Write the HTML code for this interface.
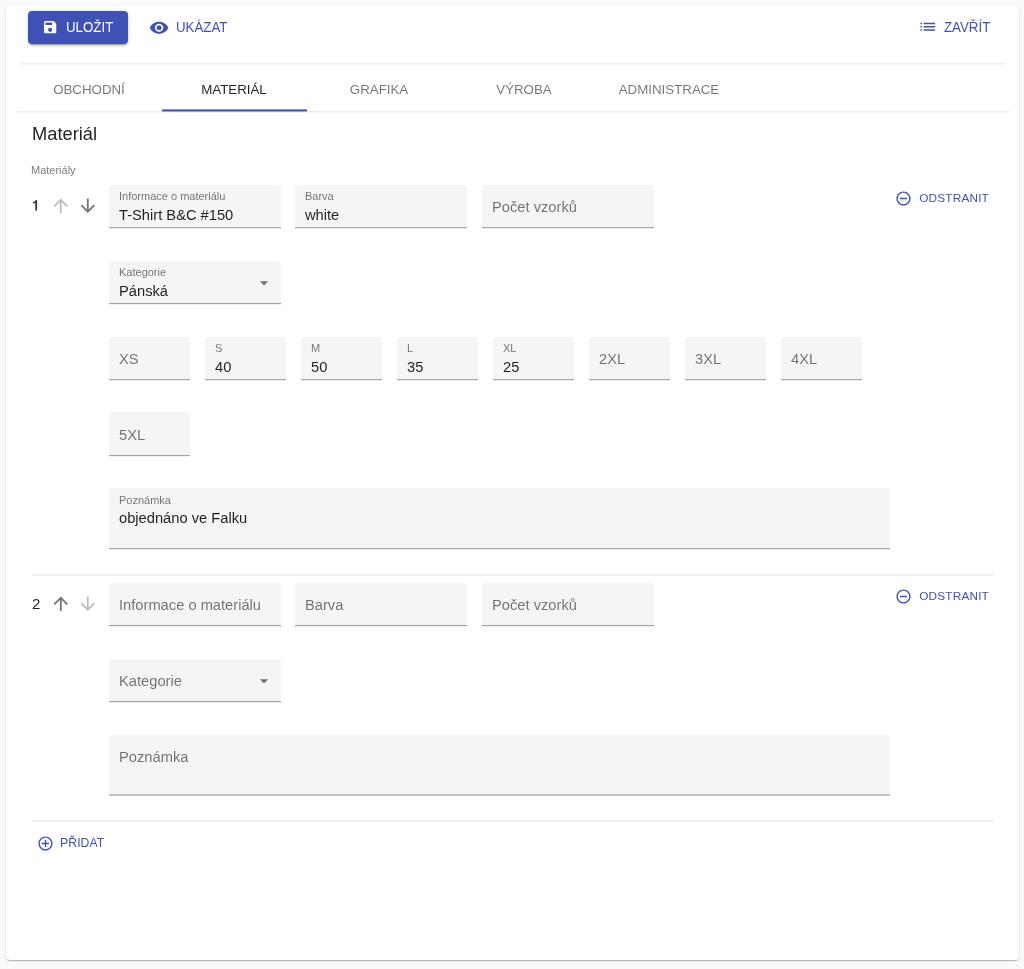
<!DOCTYPE html>
<html><head><meta charset="utf-8"><title>Materiál</title>
<style>
html,body{margin:0;padding:0;}
body{width:1024px;height:969px;background:#fafafa;position:relative;overflow:hidden;font-family:"Liberation Sans", sans-serif;}
#paper{position:absolute;left:6px;top:6px;width:1012.5px;height:954px;background:#fff;border-radius:4px;box-shadow:0px 2px 1px -1px rgba(0,0,0,0.15),0px 1px 1px 0px rgba(0,0,0,0.10),0px 1px 3px 0px rgba(0,0,0,0.10);}
.t{position:absolute;white-space:nowrap;will-change:transform;}
.r{position:absolute;}
.ic{position:absolute;display:block;}
.fld{position:absolute;background:#f5f5f5;border-radius:4px 4px 0 0;box-sizing:border-box;}
</style></head><body>
<div id="paper"></div>
<div class="r" style="left:28px;top:11px;width:100px;height:33px;background:#3f51b5;border-radius:4px;box-shadow:0px 3px 1px -2px rgba(0,0,0,0.2),0px 2px 2px 0px rgba(0,0,0,0.14),0px 1px 5px 0px rgba(0,0,0,0.12);"></div>
<svg class="ic" style="left:42.45px;top:19.20px" width="16.3" height="16.3" viewBox="0 0 24 24" preserveAspectRatio="none"><path d="M17 3H5c-1.11 0-2 .9-2 2v14c0 1.1.89 2 2 2h14c1.1 0 2-.9 2-2V7l-4-4zm-5 16c-1.66 0-3-1.34-3-3s1.34-3 3-3 3 1.34 3 3-1.34 3-3 3zm3-10H5V5h10v4z" fill="#fff"/></svg>
<div class="t" style="left:65.80px;top:21.24px;font-size:13.3px;line-height:13.3px;color:#fff;transform:scaleY(1.04);transform-origin:0 10.76px;">ULOŽIT</div>
<svg class="ic" style="left:149.20px;top:17.70px" width="20.2" height="19.4" viewBox="0 0 24 24" preserveAspectRatio="none"><path d="M12 4.5C7 4.5 2.73 7.61 1 12c1.73 4.39 6 7.5 11 7.5s9.27-3.11 11-7.5c-1.73-4.39-6-7.5-11-7.5zM12 17c-2.76 0-5-2.24-5-5s2.24-5 5-5 5 2.24 5 5-2.24 5-5 5zm0-8c-1.66 0-3 1.34-3 3s1.34 3 3 3 3-1.34 3-3-1.34-3-3-3z" fill="#3f51b5"/></svg>
<div class="t" style="left:175.60px;top:21.04px;font-size:13.3px;line-height:13.3px;color:#3f51b5;transform:scaleY(1.04);transform-origin:0 10.76px;">UKÁZAT</div>
<svg class="ic" style="left:917.85px;top:16.95px" width="19.5" height="19.5" viewBox="0 0 24 24" preserveAspectRatio="none"><path d="M3 13h2v-2H3v2zm0 4h2v-2H3v2zm0-8h2V7H3v2zm4 4h14v-2H7v2zm0 4h14v-2H7v2zM7 7v2h14V7H7z" fill="#3f51b5"/></svg>
<div class="t" style="left:944.30px;top:21.14px;font-size:13.3px;line-height:13.3px;color:#3f51b5;transform:scaleY(1.04);transform-origin:0 10.76px;">ZAVŘÍT</div>
<div class="r" style="left:21px;top:63px;width:984px;height:1px;background:#ebebeb;"></div>
<div class="r" style="left:21px;top:64px;width:984px;height:1px;background:#f6f6f6;"></div>
<div class="t" style="left:-111.00px;width:400px;text-align:center;top:82.54px;font-size:13.3px;line-height:13.3px;color:rgba(0,0,0,0.54);">OBCHODNÍ</div>
<div class="t" style="left:34.00px;width:400px;text-align:center;top:82.54px;font-size:13.3px;line-height:13.3px;color:rgba(0,0,0,0.87);">MATERIÁL</div>
<div class="t" style="left:179.00px;width:400px;text-align:center;top:82.54px;font-size:13.3px;line-height:13.3px;color:rgba(0,0,0,0.54);">GRAFIKA</div>
<div class="t" style="left:324.00px;width:400px;text-align:center;top:82.54px;font-size:13.3px;line-height:13.3px;color:rgba(0,0,0,0.54);">VÝROBA</div>
<div class="t" style="left:469.00px;width:400px;text-align:center;top:82.54px;font-size:13.3px;line-height:13.3px;color:rgba(0,0,0,0.54);">ADMINISTRACE</div>
<div class="r" style="left:17px;top:111px;width:992px;height:1px;background:#ebebeb;"></div>
<div class="r" style="left:17px;top:112px;width:992px;height:1px;background:#f6f6f6;"></div>
<div class="r" style="left:162px;top:109px;width:145px;height:1px;background:rgba(63,81,181,0.6);"></div>
<div class="r" style="left:162px;top:110px;width:145px;height:1px;background:#3f51b5;"></div>
<div class="r" style="left:162px;top:111px;width:145px;height:1px;background:rgba(63,81,181,0.45);"></div>
<div class="t" style="left:31.60px;top:124.51px;font-size:18.3px;line-height:18.3px;color:rgba(0,0,0,0.87);">Materiál</div>
<div class="t" style="left:31.40px;top:164.79px;font-size:11px;line-height:11px;color:rgba(0,0,0,0.54);">Materiály</div>
<svg class="ic" style="left:30px;top:197px" width="10" height="16" viewBox="30 197 10 16"><path d="M35.3 210.6L37.05 210.6L37.05 199.9L35.8 199.9Q35.2 201.7 33.1 202.1L33.1 203.8Q34.5 203.5 35.3 202.8Z" fill="rgba(0,0,0,0.8)"/></svg>
<svg class="ic" style="left:49.70px;top:194.70px" width="21.6" height="21.6" viewBox="0 0 24 24" preserveAspectRatio="none"><path d="M4 12l1.41 1.41L11 7.83V20h2V7.83l5.58 5.59L20 12l-8-8-8 8z" fill="rgba(0,0,0,0.26)"/></svg>
<svg class="ic" style="left:77.00px;top:194.50px" width="21.6" height="21.6" viewBox="0 0 24 24" preserveAspectRatio="none"><path d="M20 12l-1.41-1.41L13 16.17V4h-2v12.17l-5.58-5.59L4 12l8 8 8-8z" fill="rgba(0,0,0,0.54)"/></svg>
<div class="fld" style="left:109px;top:185px;width:172px;height:42px;"></div>
<div class="r" style="left:109px;top:227px;width:172px;height:1px;background:#a4a4a4;"></div>
<div class="r" style="left:109px;top:228px;width:172px;height:1px;background:#eeeeee;"></div>
<div class="t" style="left:119.30px;top:191.29px;font-size:11px;line-height:11px;color:rgba(0,0,0,0.54);">Informace o materiálu</div>
<div class="t" style="left:119.30px;top:207.76px;font-size:14.7px;line-height:14.7px;color:rgba(0,0,0,0.87);">T-Shirt B&amp;C #150</div>
<div class="fld" style="left:295px;top:185px;width:172px;height:42px;"></div>
<div class="r" style="left:295px;top:227px;width:172px;height:1px;background:#a4a4a4;"></div>
<div class="r" style="left:295px;top:228px;width:172px;height:1px;background:#eeeeee;"></div>
<div class="t" style="left:305.30px;top:191.29px;font-size:11px;line-height:11px;color:rgba(0,0,0,0.54);">Barva</div>
<div class="t" style="left:305.30px;top:207.76px;font-size:14.7px;line-height:14.7px;color:rgba(0,0,0,0.87);">white</div>
<div class="fld" style="left:482px;top:185px;width:172px;height:42px;"></div>
<div class="r" style="left:482px;top:227px;width:172px;height:1px;background:#a4a4a4;"></div>
<div class="r" style="left:482px;top:228px;width:172px;height:1px;background:#eeeeee;"></div>
<div class="t" style="left:492.30px;top:200.36px;font-size:14.7px;line-height:14.7px;color:rgba(0,0,0,0.54);">Počet vzorků</div>
<svg class="ic" style="left:894.90px;top:190.00px" width="17" height="17" viewBox="0 0 24 24" preserveAspectRatio="none"><path d="M7 11v2h10v-2H7zm5-9C6.48 2 2 6.48 2 12s4.48 10 10 10 10-4.48 10-10S17.52 2 12 2zm0 18c-4.41 0-8-3.59-8-8s3.59-8 8-8 8 3.59 8 8-3.59 8-8 8z" fill="#3f51b5"/></svg>
<div class="t" style="left:589.00px;width:400px;text-align:right;top:193.01px;font-size:11.8px;line-height:11.8px;color:#3f51b5;letter-spacing:0.18px;">ODSTRANIT</div>
<div class="fld" style="left:109px;top:261px;width:172px;height:42px;"></div>
<div class="r" style="left:109px;top:303px;width:172px;height:1px;background:#a4a4a4;"></div>
<div class="r" style="left:109px;top:304px;width:172px;height:1px;background:#eeeeee;"></div>
<div class="t" style="left:119.30px;top:267.29px;font-size:11px;line-height:11px;color:rgba(0,0,0,0.54);">Kategorie</div>
<div class="t" style="left:119.30px;top:283.76px;font-size:14.7px;line-height:14.7px;color:rgba(0,0,0,0.87);">Pánská</div>
<svg class="ic" style="left:253.65px;top:272.68px" width="20" height="20" viewBox="0 0 24 24"><path d="M7 10l5 5 5-5z" fill="rgba(0,0,0,0.54)"/></svg>
<div class="fld" style="left:109px;top:337px;width:81px;height:42px;"></div>
<div class="r" style="left:109px;top:379px;width:81px;height:1px;background:#a4a4a4;"></div>
<div class="r" style="left:109px;top:380px;width:81px;height:1px;background:#eeeeee;"></div>
<div class="t" style="left:119.30px;top:352.36px;font-size:14.7px;line-height:14.7px;color:rgba(0,0,0,0.54);">XS</div>
<div class="fld" style="left:205px;top:337px;width:81px;height:42px;"></div>
<div class="r" style="left:205px;top:379px;width:81px;height:1px;background:#a4a4a4;"></div>
<div class="r" style="left:205px;top:380px;width:81px;height:1px;background:#eeeeee;"></div>
<div class="t" style="left:215.30px;top:343.29px;font-size:11px;line-height:11px;color:rgba(0,0,0,0.54);">S</div>
<div class="t" style="left:215.30px;top:359.76px;font-size:14.7px;line-height:14.7px;color:rgba(0,0,0,0.87);">40</div>
<div class="fld" style="left:301px;top:337px;width:81px;height:42px;"></div>
<div class="r" style="left:301px;top:379px;width:81px;height:1px;background:#a4a4a4;"></div>
<div class="r" style="left:301px;top:380px;width:81px;height:1px;background:#eeeeee;"></div>
<div class="t" style="left:311.30px;top:343.29px;font-size:11px;line-height:11px;color:rgba(0,0,0,0.54);">M</div>
<div class="t" style="left:311.30px;top:359.76px;font-size:14.7px;line-height:14.7px;color:rgba(0,0,0,0.87);">50</div>
<div class="fld" style="left:397px;top:337px;width:81px;height:42px;"></div>
<div class="r" style="left:397px;top:379px;width:81px;height:1px;background:#a4a4a4;"></div>
<div class="r" style="left:397px;top:380px;width:81px;height:1px;background:#eeeeee;"></div>
<div class="t" style="left:407.30px;top:343.29px;font-size:11px;line-height:11px;color:rgba(0,0,0,0.54);">L</div>
<div class="t" style="left:407.30px;top:359.76px;font-size:14.7px;line-height:14.7px;color:rgba(0,0,0,0.87);">35</div>
<div class="fld" style="left:493px;top:337px;width:81px;height:42px;"></div>
<div class="r" style="left:493px;top:379px;width:81px;height:1px;background:#a4a4a4;"></div>
<div class="r" style="left:493px;top:380px;width:81px;height:1px;background:#eeeeee;"></div>
<div class="t" style="left:503.30px;top:343.29px;font-size:11px;line-height:11px;color:rgba(0,0,0,0.54);">XL</div>
<div class="t" style="left:503.30px;top:359.76px;font-size:14.7px;line-height:14.7px;color:rgba(0,0,0,0.87);">25</div>
<div class="fld" style="left:589px;top:337px;width:81px;height:42px;"></div>
<div class="r" style="left:589px;top:379px;width:81px;height:1px;background:#a4a4a4;"></div>
<div class="r" style="left:589px;top:380px;width:81px;height:1px;background:#eeeeee;"></div>
<div class="t" style="left:599.30px;top:352.36px;font-size:14.7px;line-height:14.7px;color:rgba(0,0,0,0.54);">2XL</div>
<div class="fld" style="left:685px;top:337px;width:81px;height:42px;"></div>
<div class="r" style="left:685px;top:379px;width:81px;height:1px;background:#a4a4a4;"></div>
<div class="r" style="left:685px;top:380px;width:81px;height:1px;background:#eeeeee;"></div>
<div class="t" style="left:695.30px;top:352.36px;font-size:14.7px;line-height:14.7px;color:rgba(0,0,0,0.54);">3XL</div>
<div class="fld" style="left:781px;top:337px;width:81px;height:42px;"></div>
<div class="r" style="left:781px;top:379px;width:81px;height:1px;background:#a4a4a4;"></div>
<div class="r" style="left:781px;top:380px;width:81px;height:1px;background:#eeeeee;"></div>
<div class="t" style="left:791.30px;top:352.36px;font-size:14.7px;line-height:14.7px;color:rgba(0,0,0,0.54);">4XL</div>
<div class="fld" style="left:109px;top:412px;width:81px;height:43px;"></div>
<div class="r" style="left:109px;top:455px;width:81px;height:1px;background:#a4a4a4;"></div>
<div class="r" style="left:109px;top:456px;width:81px;height:1px;background:#eeeeee;"></div>
<div class="t" style="left:119.30px;top:428.36px;font-size:14.7px;line-height:14.7px;color:rgba(0,0,0,0.54);">5XL</div>
<div class="fld" style="left:109px;top:488px;width:781px;height:60px;"></div>
<div class="r" style="left:109px;top:548px;width:781px;height:1px;background:#a4a4a4;"></div>
<div class="r" style="left:109px;top:549px;width:781px;height:1px;background:#eeeeee;"></div>
<div class="t" style="left:119.30px;top:495.29px;font-size:11px;line-height:11px;color:rgba(0,0,0,0.54);">Poznámka</div>
<div class="t" style="left:119.30px;top:510.76px;font-size:14.7px;line-height:14.7px;color:rgba(0,0,0,0.87);">objednáno ve Falku</div>
<div class="r" style="left:32px;top:574px;width:962px;height:2px;background:#f0f0f0;"></div>
<div class="t" style="left:31.60px;top:596.30px;font-size:15px;line-height:15px;color:rgba(0,0,0,0.87);">2</div>
<svg class="ic" style="left:49.70px;top:592.70px" width="21.6" height="21.6" viewBox="0 0 24 24" preserveAspectRatio="none"><path d="M4 12l1.41 1.41L11 7.83V20h2V7.83l5.58 5.59L20 12l-8-8-8 8z" fill="rgba(0,0,0,0.54)"/></svg>
<svg class="ic" style="left:77.00px;top:592.50px" width="21.6" height="21.6" viewBox="0 0 24 24" preserveAspectRatio="none"><path d="M20 12l-1.41-1.41L13 16.17V4h-2v12.17l-5.58-5.59L4 12l8 8 8-8z" fill="rgba(0,0,0,0.26)"/></svg>
<div class="fld" style="left:109px;top:583px;width:172px;height:42px;"></div>
<div class="r" style="left:109px;top:625px;width:172px;height:1px;background:#a4a4a4;"></div>
<div class="r" style="left:109px;top:626px;width:172px;height:1px;background:#eeeeee;"></div>
<div class="t" style="left:119.30px;top:598.36px;font-size:14.7px;line-height:14.7px;color:rgba(0,0,0,0.54);">Informace o materiálu</div>
<div class="fld" style="left:295px;top:583px;width:172px;height:42px;"></div>
<div class="r" style="left:295px;top:625px;width:172px;height:1px;background:#a4a4a4;"></div>
<div class="r" style="left:295px;top:626px;width:172px;height:1px;background:#eeeeee;"></div>
<div class="t" style="left:305.30px;top:598.36px;font-size:14.7px;line-height:14.7px;color:rgba(0,0,0,0.54);">Barva</div>
<div class="fld" style="left:482px;top:583px;width:172px;height:42px;"></div>
<div class="r" style="left:482px;top:625px;width:172px;height:1px;background:#a4a4a4;"></div>
<div class="r" style="left:482px;top:626px;width:172px;height:1px;background:#eeeeee;"></div>
<div class="t" style="left:492.30px;top:598.36px;font-size:14.7px;line-height:14.7px;color:rgba(0,0,0,0.54);">Počet vzorků</div>
<svg class="ic" style="left:894.90px;top:588.00px" width="17" height="17" viewBox="0 0 24 24" preserveAspectRatio="none"><path d="M7 11v2h10v-2H7zm5-9C6.48 2 2 6.48 2 12s4.48 10 10 10 10-4.48 10-10S17.52 2 12 2zm0 18c-4.41 0-8-3.59-8-8s3.59-8 8-8 8 3.59 8 8-3.59 8-8 8z" fill="#3f51b5"/></svg>
<div class="t" style="left:589.00px;width:400px;text-align:right;top:591.01px;font-size:11.8px;line-height:11.8px;color:#3f51b5;letter-spacing:0.18px;">ODSTRANIT</div>
<div class="fld" style="left:109px;top:659px;width:172px;height:42px;"></div>
<div class="r" style="left:109px;top:701px;width:172px;height:1px;background:#a4a4a4;"></div>
<div class="r" style="left:109px;top:702px;width:172px;height:1px;background:#eeeeee;"></div>
<div class="t" style="left:119.30px;top:674.36px;font-size:14.7px;line-height:14.7px;color:rgba(0,0,0,0.54);">Kategorie</div>
<svg class="ic" style="left:253.65px;top:670.68px" width="20" height="20" viewBox="0 0 24 24"><path d="M7 10l5 5 5-5z" fill="rgba(0,0,0,0.54)"/></svg>
<div class="fld" style="left:109px;top:735px;width:781px;height:59px;"></div>
<div class="r" style="left:109px;top:794px;width:781px;height:2px;background:#c2c2c2;"></div>
<div class="t" style="left:119.30px;top:750.36px;font-size:14.7px;line-height:14.7px;color:rgba(0,0,0,0.54);">Poznámka</div>
<div class="r" style="left:32px;top:820px;width:962px;height:2px;background:#f0f0f0;"></div>
<svg class="ic" style="left:36.90px;top:834.50px" width="17" height="17" viewBox="0 0 24 24" preserveAspectRatio="none"><path d="M13 7h-2v4H7v2h4v4h2v-4h4v-2h-4V7zm-1-5C6.48 2 2 6.48 2 12s4.48 10 10 10 10-4.48 10-10S17.52 2 12 2zm0 18c-4.41 0-8-3.59-8-8s3.59-8 8-8 8 3.59 8 8-3.59 8-8 8z" fill="#3f51b5"/></svg>
<div class="t" style="left:60.20px;top:836.92px;font-size:12.2px;line-height:12.2px;color:#3f51b5;letter-spacing:0.1px;">PŘIDAT</div>
</body></html>
